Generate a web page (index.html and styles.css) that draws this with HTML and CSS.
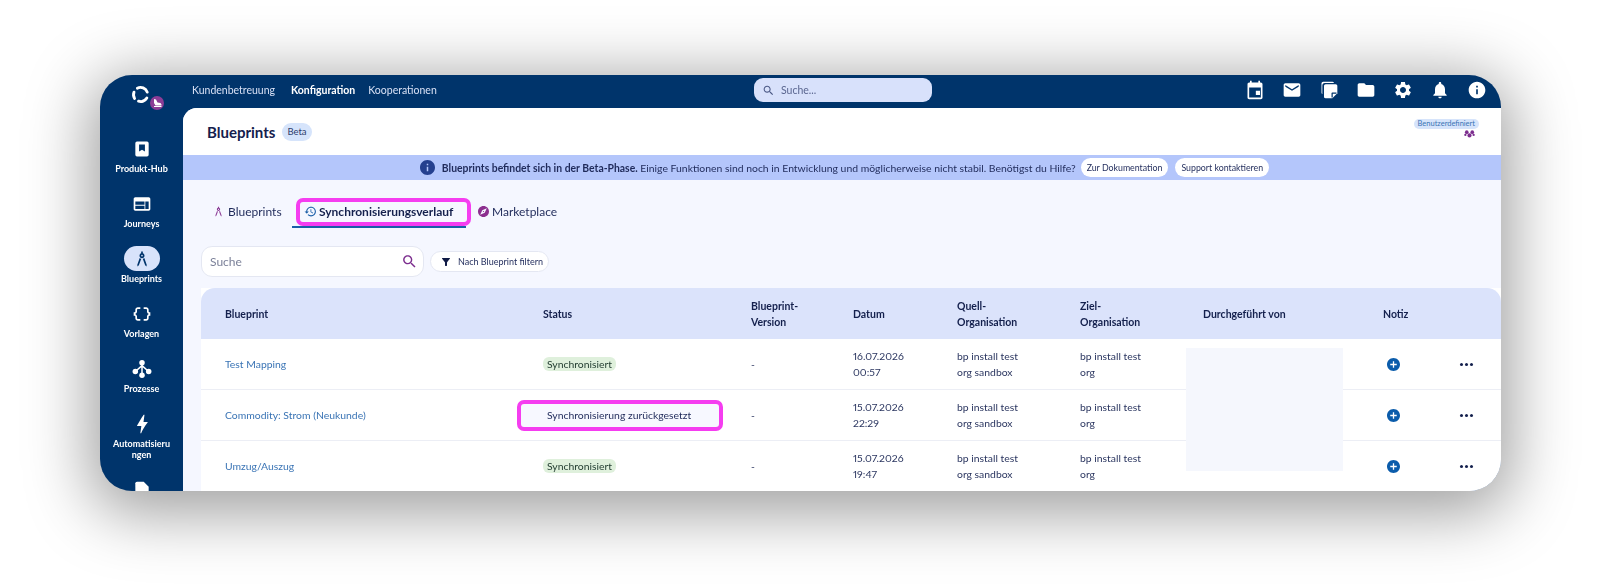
FILE: index.html
```html
<!DOCTYPE html>
<html lang="de">
<head>
  <meta charset="UTF-8">
  <title>Blueprints</title>
  <link rel="stylesheet" href="styles.css">
</head>
<body>
  <div class="window">
    <aside class="sidebar">
      <div class="logo">
        <svg class="logo-mark" viewBox="0 0 24 24" fill="none" stroke="#fff" stroke-width="3.600" stroke-linecap="round">
          <path d="M8 4A9 9 0 0 1 20.500 9"/>
          <path d="M20 16.500A9 9 0 0 1 9.500 20.500"/>
          <path d="M4.500 17A9 9 0 0 1 3.800 9"/>
        </svg>
        <span class="logo-badge">
          <svg viewBox="0 0 24 24" fill="#fff"><path d="M6 4l4 1 3 6 6 1 2 3v2H9L6 12zM6 18h15v2H6z"/></svg>
        </span>
      </div>
      <nav class="side-nav">
        <a class="side-item">
          <span class="side-icon"><svg viewBox="0 0 24 24"><path fill="#fff" d="M6 3h12a2 2 0 0 1 2 2v14a2 2 0 0 1-2 2H6a2 2 0 0 1-2-2V5a2 2 0 0 1 2-2zm2.500 3.500V15l3.500-2 3.500 2V6.500z"/></svg></span>
          <span class="side-label">Produkt-Hub</span>
        </a>
        <a class="side-item">
          <span class="side-icon"><svg viewBox="0 0 24 24"><path fill="#fff" d="M20 4H4c-1.100 0-1.990.9-1.990 2L2 18c0 1.100.9 2 2 2h16c1.100 0 2-.9 2-2V6c0-1.100-.9-2-2-2zm-5 14H4v-4h11v4zm0-5H4V9h11v4zm5 5h-4V9h4v9z"/></svg></span>
          <span class="side-label">Journeys</span>
        </a>
        <a class="side-item active">
          <span class="side-icon"><svg viewBox="0 0 24 24"><path fill="#00346b" d="M6.360 18.780L6.610 21l1.620-1.540 2.770-7.600c-.68-.17-1.280-.51-1.770-.98L6.360 18.780zM14.770 10.880c-.49.47-1.100.81-1.770.98l2.770 7.600L17.390 21l.26-2.220-2.880-7.900zM15 8c0-1.300-.84-2.400-2-2.820V3h-2v2.180C9.840 5.600 9 6.700 9 8c0 1.660 1.340 3 3 3s3-1.340 3-3zm-3 1c-.55 0-1-.45-1-1s.45-1 1-1 1 .45 1 1-.45 1-1 1z"/></svg></span>
          <span class="side-label">Blueprints</span>
        </a>
        <a class="side-item">
          <span class="side-icon"><svg viewBox="0 0 24 24"><path fill="#fff" d="M4 7v2c0 .55-.45 1-1 1H2v4h1c.55 0 1 .45 1 1v2c0 1.650 1.350 3 3 3h3v-2H7c-.55 0-1-.45-1-1v-2c0-1.300-.84-2.420-2-2.830v-.34C5.160 11.420 6 10.300 6 9V7c0-.55.45-1 1-1h3V4H7C5.350 4 4 5.350 4 7zM21 10c-.55 0-1-.45-1-1V7c0-1.650-1.350-3-3-3h-3v2h3c.55 0 1 .45 1 1v2c0 1.300.84 2.420 2 2.830v.34c-1.160.41-2 1.520-2 2.830v2c0 .55-.45 1-1 1h-3v2h3c1.650 0 3-1.350 3-3v-2c0-.55.45-1 1-1h1v-4h-1z"/></svg></span>
          <span class="side-label">Vorlagen</span>
        </a>
        <a class="side-item">
          <span class="side-icon"><svg viewBox="0 0 24 24"><g fill="#fff"><circle cx="12" cy="4.500" r="3.300"/><circle cx="4" cy="15" r="3.300"/><circle cx="20" cy="15" r="3.300"/><circle cx="12" cy="19.500" r="3.300"/></g><path fill="none" stroke="#fff" stroke-width="1.800" d="M12 6v12M12 8l-8 7M12 8l8 7"/></svg></span>
          <span class="side-label">Prozesse</span>
        </a>
        <a class="side-item">
          <span class="side-icon"><svg viewBox="0 0 24 24"><path fill="#fff" d="M11 23h-1l1.200-8.500H6.500c-.58 0-.57-.32-.38-.66C8 10.500 11 5.500 14 1h1l-1.200 8.500h4.700c.49 0 .56.33.47.51C15 15 12.500 19.500 11 23z"/></svg></span>
          <span class="side-label">Automatisierungen</span>
        </a>
        <a class="side-item">
          <span class="side-icon"><svg viewBox="0 0 24 24"><path fill="#fff" d="M6 2h8l6 6v12a2 2 0 0 1-2 2H6a2 2 0 0 1-2-2V4a2 2 0 0 1 2-2z"/></svg></span>
        </a>
      </nav>
    </aside>

    <div class="main">
      <header class="topbar">
        <nav class="top-nav">
          <a>Kundenbetreuung</a>
          <a class="current">Konfiguration</a>
          <a>Kooperationen</a>
        </nav>
        <div class="global-search">
          <svg viewBox="0 0 24 24"><path fill="#4c5a86" d="M15.500 14h-.79l-.28-.27C15.410 12.590 16 11.110 16 9.500 16 5.910 13.090 3 9.500 3S3 5.910 3 9.500 5.910 16 9.500 16c1.610 0 3.090-.59 4.230-1.570l.27.28v.79l5 4.990L20.490 19l-4.990-5zm-6 0C7.010 14 5 11.990 5 9.500S7.010 5 9.500 5 14 7.010 14 9.500 11.990 14 9.500 14z"/></svg>
          <span>Suche...</span>
        </div>
        <div class="top-icons">
          <svg viewBox="0 0 24 24"><path fill="#fff" d="M18 13h-5v5h5v-5zM16 1v2H8V1H6v2H5c-1.110 0-1.990.9-1.990 2L3 21c0 1.100.89 2 2 2h14c1.100 0 2-.9 2-2V5c0-1.100-.9-2-2-2h-1V1h-2zm3 20H5V9h14v12z"/></svg>
          <svg viewBox="0 0 24 24"><path fill="#fff" d="M20 4H4c-1.100 0-2 .9-2 2v12c0 1.100.9 2 2 2h16c1.100 0 2-.9 2-2V6c0-1.100-.9-2-2-2zm0 4l-8 5-8-5V6l8 5 8-5v2z"/></svg>
          <svg viewBox="0 0 24 24"><path fill="#fff" d="M5 2h11a2 2 0 0 1 2 1.500H7A3 3 0 0 0 4 6.500V17a2 2 0 0 1-1-1.700V4a2 2 0 0 1 2-2z"/><path fill="#fff" d="M8 5h12a2 2 0 0 1 2 2v9l-6 6H8a2 2 0 0 1-2-2V7a2 2 0 0 1 2-2z"/><path fill="#00346b" d="M15 21v-5a1 1 0 0 1 1-1h5v1.500h-4.500V21z"/></svg>
          <svg viewBox="0 0 24 24"><path fill="#fff" d="M10 4H4c-1.100 0-2 .9-2 2v12c0 1.100.9 2 2 2h16c1.100 0 2-.9 2-2V8c0-1.100-.9-2-2-2h-8l-2-2z"/></svg>
          <svg viewBox="0 0 24 24"><path fill="#fff" d="M19.140 12.940c.04-.3.06-.61.06-.94 0-.32-.02-.64-.07-.94l2.030-1.580c.18-.14.23-.41.12-.61l-1.920-3.320c-.12-.22-.37-.29-.59-.22l-2.390.96c-.5-.38-1.030-.7-1.620-.94l-.36-2.540c-.04-.24-.24-.41-.48-.41h-3.840c-.24 0-.43.17-.47.41l-.36 2.540c-.59.24-1.130.57-1.620.94l-2.390-.96c-.22-.08-.47 0-.59.22L2.740 8.870c-.12.21-.08.47.12.61l2.030 1.580c-.05.3-.09.63-.09.94s.02.64.07.94l-2.030 1.580c-.18.14-.23.41-.12.61l1.920 3.320c.12.22.37.29.59.22l2.390-.96c.5.38 1.030.7 1.620.94l.36 2.540c.05.24.24.41.48.41h3.840c.24 0 .44-.17.47-.41l.36-2.540c.59-.24 1.130-.56 1.620-.94l2.390.96c.22.08.47 0 .59-.22l1.920-3.320c.12-.22.07-.47-.12-.61l-2.010-1.580zM12 15.600c-1.980 0-3.600-1.620-3.600-3.600s1.620-3.600 3.600-3.600 3.600 1.620 3.600 3.600-1.620 3.600-3.600 3.600z"/></svg>
          <svg viewBox="0 0 24 24"><path fill="#fff" d="M12 22c1.100 0 2-.9 2-2h-4c0 1.100.89 2 2 2zm6-6v-5c0-3.070-1.640-5.640-4.500-6.320V4c0-.83-.67-1.500-1.500-1.500s-1.500.67-1.500 1.500v.68C7.630 5.360 6 7.920 6 11v5l-2 2v1h16v-1l-2-2z"/></svg>
          <svg viewBox="0 0 24 24"><path fill="#fff" d="M12 2C6.480 2 2 6.480 2 12s4.480 10 10 10 10-4.480 10-10S17.520 2 12 2zm1 15h-2v-6h2v6zm0-8h-2V7h2v2z"/></svg>
        </div>
      </header>

      <div class="content">
        <div class="title-bar">
          <h1>Blueprints</h1>
          <span class="beta">Beta</span>
          <div class="org-type">
            <span class="org-chip">Benutzerdefiniert</span>
            <svg viewBox="0 0 24 16"><g fill="#7c2d8e"><circle cx="6" cy="4" r="4"/><circle cx="18" cy="4" r="4"/><circle cx="12" cy="11" r="4.500"/><circle cx="3" cy="10" r="2.500"/><circle cx="21" cy="10" r="2.500"/></g></svg>
          </div>
        </div>

        <div class="banner">
          <svg class="banner-icon" viewBox="2 2 20 20"><path fill="#25408f" d="M12 2C6.480 2 2 6.480 2 12s4.480 10 10 10 10-4.480 10-10S17.520 2 12 2zm1 15h-2v-6h2v6zm0-8h-2V7h2v2z"/></svg>
          <p><b>Blueprints befindet sich in der Beta-Phase.</b> Einige Funktionen sind noch in Entwicklung und möglicherweise nicht stabil. Benötigst du Hilfe?</p>
          <button>Zur Dokumentation</button>
          <button>Support kontaktieren</button>
        </div>

        <div class="tabs">
          <a class="tab tab-first">
            <svg viewBox="0 0 24 24"><path fill="#8c3d96" d="M6.360 18.780L6.610 21l1.620-1.540 2.770-7.600c-.68-.17-1.280-.51-1.770-.98L6.360 18.780zM14.770 10.880c-.49.47-1.100.81-1.770.98l2.770 7.600L17.390 21l.26-2.220-2.880-7.900zM15 8c0-1.300-.84-2.400-2-2.820V3h-2v2.180C9.840 5.600 9 6.700 9 8c0 1.660 1.340 3 3 3s3-1.340 3-3zm-3 1c-.55 0-1-.45-1-1s.45-1 1-1 1 .45 1 1-.45 1-1 1z"/></svg>
            Blueprints
          </a>
          <a class="tab tab-active">
            <svg viewBox="0 0 24 24"><path fill="#1a5ea8" d="M13 3c-4.970 0-9 4.030-9 9H1l3.890 3.890.07.14L9 12H6c0-3.870 3.130-7 7-7s7 3.130 7 7-3.130 7-7 7c-1.930 0-3.680-.79-4.940-2.060l-1.420 1.420C8.270 19.990 10.510 21 13 21c4.970 0 9-4.030 9-9s-4.030-9-9-9zm-1 5v5l4.280 2.540.72-1.210-3.500-2.080V8H12z"/></svg>
            Synchronisierungsverlauf
            <span class="tab-mark"></span>
          </a>
          <a class="tab tab-last">
            <svg viewBox="2 2 20 20"><path fill="#8c2f8f" d="M12 10.900c-.61 0-1.100.49-1.100 1.100s.49 1.100 1.100 1.100c.61 0 1.100-.49 1.100-1.100s-.49-1.100-1.100-1.100zM12 2C6.480 2 2 6.480 2 12s4.480 10 10 10 10-4.480 10-10S17.520 2 12 2zm2.190 12.190L6 18l3.810-8.190L18 6l-3.810 8.190z"/></svg>
            Marketplace
          </a>
        </div>

        <div class="filters">
          <div class="search-box">
            <span>Suche</span>
            <svg viewBox="0 0 24 24"><path fill="#7c2d8e" d="M15.500 14h-.79l-.28-.27C15.410 12.590 16 11.110 16 9.500 16 5.910 13.090 3 9.500 3S3 5.910 3 9.500 5.910 16 9.500 16c1.610 0 3.090-.59 4.230-1.570l.27.28v.79l5 4.990L20.490 19l-4.990-5zm-6 0C7.010 14 5 11.990 5 9.500S7.010 5 9.500 5 14 7.010 14 9.500 11.990 14 9.500 14z"/></svg>
          </div>
          <button class="filter-btn">
            <svg viewBox="0 0 24 24"><path fill="#0f1a45" d="M4.250 5.610C6.270 8.200 10 13 10 13v6c0 .55.45 1 1 1h2c.55 0 1-.45 1-1v-6s3.720-4.800 5.740-7.390c.51-.66.04-1.610-.79-1.610H5.040c-.83 0-1.300.95-.79 1.610z"/></svg>
            Nach Blueprint filtern
          </button>
        </div>

        <div class="table-wrap">
          <table class="history">
            <colgroup>
              <col class="c-name"><col class="c-status"><col class="c-version"><col class="c-date"><col class="c-org"><col class="c-org"><col class="c-user"><col class="c-note"><col>
            </colgroup>
            <thead>
              <tr>
                <th>Blueprint</th>
                <th>Status</th>
                <th>Blueprint-<br>Version</th>
                <th>Datum</th>
                <th>Quell-<br>Organisation</th>
                <th>Ziel-<br>Organisation</th>
                <th>Durchgeführt von</th>
                <th>Notiz</th>
                <th></th>
              </tr>
            </thead>
            <tbody>
              <tr>
                <td><a class="link">Test Mapping</a></td>
                <td><span class="chip">Synchronisiert</span></td>
                <td>-</td>
                <td>16.07.2026<br>00:57</td>
                <td>bp install test<br>org sandbox</td>
                <td>bp install test<br>org</td>
                <td></td>
                <td><svg class="add" viewBox="2 2 20 20"><path fill="#0b5cab" d="M12 2C6.480 2 2 6.480 2 12s4.480 10 10 10 10-4.480 10-10S17.520 2 12 2zm5 11h-4v4h-2v-4H7v-2h4V7h2v4h4v2z"/></svg></td>
                <td><span class="dots"><i></i><i></i><i></i></span></td>
              </tr>
              <tr>
                <td><a class="link">Commodity: Strom (Neukunde)</a></td>
                <td><span class="status-marked">Synchronisierung zurückgesetzt</span></td>
                <td>-</td>
                <td>15.07.2026<br>22:29</td>
                <td>bp install test<br>org sandbox</td>
                <td>bp install test<br>org</td>
                <td></td>
                <td><svg class="add" viewBox="2 2 20 20"><path fill="#0b5cab" d="M12 2C6.480 2 2 6.480 2 12s4.480 10 10 10 10-4.480 10-10S17.520 2 12 2zm5 11h-4v4h-2v-4H7v-2h4V7h2v4h4v2z"/></svg></td>
                <td><span class="dots"><i></i><i></i><i></i></span></td>
              </tr>
              <tr>
                <td><a class="link">Umzug/Auszug</a></td>
                <td><span class="chip">Synchronisiert</span></td>
                <td>-</td>
                <td>15.07.2026<br>19:47</td>
                <td>bp install test<br>org sandbox</td>
                <td>bp install test<br>org</td>
                <td></td>
                <td><svg class="add" viewBox="2 2 20 20"><path fill="#0b5cab" d="M12 2C6.480 2 2 6.480 2 12s4.480 10 10 10 10-4.480 10-10S17.520 2 12 2zm5 11h-4v4h-2v-4H7v-2h4V7h2v4h4v2z"/></svg></td>
                <td><span class="dots"><i></i><i></i><i></i></span></td>
              </tr>
            </tbody>
          </table>
          <div class="redacted"></div>
        </div>
      </div>
    </div>
  </div>
</body>
</html>
```

FILE: styles.css
```css
html, body {
  margin: 0;
  height: 586px;
  overflow: hidden;
  background: #fff;
}
body {
  padding: 75px 0 0 100px;
  box-sizing: border-box;
  font-family: Lato, "Open Sans", sans-serif;
  color: #17224d;
}
svg {
  display: block;
}
.window {
  display: flex;
  width: 1401px;
  height: 416px;
  background: #00346b;
  border-radius: 32px;
  overflow: hidden;
  box-shadow: 0 12px 64px 10px rgba(0, 0, 0, 0.38);
  filter: blur(0.3px);
}

/* sidebar */
.sidebar {
  width: 83px;
  flex: none;
  color: #fff;
}
.logo {
  position: relative;
  height: 61px;
}
.logo-mark {
  position: absolute;
  left: 31px;
  top: 10px;
  width: 19px;
  height: 19px;
}
.logo-badge {
  position: absolute;
  left: 50px;
  top: 21px;
  width: 14px;
  height: 14px;
  padding: 1px;
  box-sizing: border-box;
  border-radius: 50%;
  background: #8c3d96;
}
.side-nav {
  display: flex;
  flex-direction: column;
}
.side-item {
  padding-bottom: 17px;
  display: flex;
  flex-direction: column;
  align-items: center;
  text-align: center;
}
.side-icon {
  width: 36px;
  height: 25px;
  border-radius: 13px;
  display: flex;
  align-items: center;
  justify-content: center;
}
.side-icon svg {
  width: 20px;
  height: 20px;
}
.side-item.active .side-icon {
  background: #d8e3fb;
}
.side-label {
  margin-top: 2px;
  width: 60px;
  font-size: 9px;
  line-height: 11px;
  font-weight: 700;
  word-break: break-all;
}

/* top bar */
.main {
  flex: 1;
  min-width: 0;
  display: flex;
  flex-direction: column;
}
.topbar {
  height: 33px;
  flex: none;
  box-sizing: border-box;
  padding-bottom: 3px;
  display: flex;
  align-items: center;
}
.top-nav {
  width: 571px;
  box-sizing: border-box;
  display: flex;
  gap: 13px;
  padding-left: 9px;
  font-size: 10.500px;
  color: #d7e0f5;
}
.top-nav .current {
  color: #fff;
  font-weight: 700;
  margin-left: 3px;
}
.global-search {
  width: 178px;
  height: 24px;
  box-sizing: border-box;
  padding-left: 8px;
  display: flex;
  align-items: center;
  gap: 6px;
  background: #d8e1fb;
  border-radius: 9px;
  font-size: 10.500px;
  color: #5a6690;
}
.global-search svg {
  width: 13px;
  height: 13px;
}
.top-icons {
  margin-left: auto;
  display: flex;
  gap: 17px;
  padding-right: 14px;
}
.top-icons svg {
  width: 20px;
  height: 20px;
}

/* content */
.content {
  flex: 1;
  min-height: 0;
  background: #f5f7ff;
  border-top-left-radius: 14px;
  overflow: hidden;
}
.title-bar {
  height: 47px;
  box-sizing: border-box;
  background: #fff;
  display: flex;
  align-items: center;
  padding: 0 22px 0 24px;
}
.title-bar h1 {
  margin: 0;
  font-size: 15px;
  font-weight: 700;
  color: #14204d;
}
.beta {
  margin-left: 7px;
  height: 18px;
  line-height: 18px;
  padding: 0 5px;
  border-radius: 9px;
  background: #d6e4fb;
  font-size: 9.500px;
  color: #2e3c6b;
}
.org-type {
  margin-left: auto;
  align-self: flex-start;
  padding-top: 11px;
  display: flex;
  flex-direction: column;
  align-items: flex-end;
}
.org-chip {
  height: 10px;
  line-height: 10px;
  padding: 0 4px;
  border-radius: 5px;
  background: #d6e4fb;
  color: #3a74b5;
  font-size: 7.500px;
}
.org-type svg {
  width: 11px;
  height: 8px;
  margin: 1px 4px 0 0;
}
.banner {
  height: 25px;
  padding-left: 5px;
  background: #b4c6fb;
  display: flex;
  align-items: center;
  justify-content: center;
  gap: 7px;
  font-size: 10.400px;
  color: #1f2a5a;
}
.banner p {
  margin: 0 -2px 0 0;
}
.banner-icon {
  width: 15px;
  height: 15px;
}
.banner button {
  height: 19px;
  padding: 0 6px;
  border: 0;
  border-radius: 10px;
  background: #fff;
  font: 8.800px Lato, "Open Sans", sans-serif;
  color: #1f2a5a;
}

/* tabs */
.tabs {
  display: flex;
  align-items: flex-end;
  height: 48px;
  font-size: 12px;
  color: #1f2a5a;
}
.tab {
  display: flex;
  align-items: center;
  height: 30px;
  padding-bottom: 1px;
  box-sizing: border-box;
  border-bottom: 2px solid transparent;
}
.tab svg {
  width: 13px;
  height: 13px;
  margin-right: 3px;
}
.tab-first {
  margin-left: 29px;
  width: 80px;
}
.tab-active {
  position: relative;
  width: 174px;
  padding-left: 12px;
  font-weight: 700;
  color: #14204d;
  border-bottom-color: #1a5ea8;
}
.tab-active svg {
  margin-right: 2px;
}
.tab-mark {
  position: absolute;
  left: 4px;
  right: -5px;
  top: 0;
  height: 28px;
  box-sizing: border-box;
  border: 4px solid #f53df0;
  border-radius: 7px;
}
.tab-last {
  margin-left: 12px;
}
.tab-last svg {
  width: 11px;
  height: 11px;
  margin-right: 3px;
}
.filters {
  display: flex;
  align-items: center;
  gap: 6px;
  margin: 18px 0 11px 18px;
}
.search-box {
  width: 223px;
  height: 31px;
  box-sizing: border-box;
  padding: 0 5px 1px 8px;
  display: flex;
  align-items: center;
  justify-content: space-between;
  background: #fff;
  border: 1px solid #e4e7f2;
  border-radius: 11px;
  font-size: 12px;
  color: #7b8199;
}
.search-box svg {
  width: 17px;
  height: 17px;
}
.filter-btn {
  height: 21px;
  width: 119px;
  padding: 0 0 0 9px;
  display: flex;
  align-items: center;
  gap: 6px;
  white-space: nowrap;
  background: #fff;
  border: 1px solid #e4e7f2;
  border-radius: 11px;
  font: 9px Lato, "Open Sans", sans-serif;
  color: #1f2a5a;
}
.filter-btn svg {
  width: 12px;
  height: 12px;
}

/* table */
.table-wrap {
  position: relative;
  margin-left: 18px;
}
.history {
  width: 1300px;
  table-layout: fixed;
  border-collapse: separate;
  border-spacing: 0;
  background: #fff;
  font-size: 10.400px;
  font-variant-numeric: proportional-nums;
  color: #2b3660;
}
.c-name { width: 342px; }
.c-status { width: 208px; }
.c-version { width: 102px; }
.c-date { width: 104px; }
.c-org { width: 123px; }
.c-user { width: 180px; }
.c-note { width: 74px; }
.history th {
  height: 51px;
  padding: 0;
  text-align: left;
  background: #dbe3fb;
  font-size: 10.500px;
  line-height: 16px;
  font-weight: 700;
  color: #14204d;
}
.history th:first-child {
  border-top-left-radius: 14px;
}
.history th:last-child {
  border-top-right-radius: 14px;
}
.history th:first-child, .history td:first-child {
  padding-left: 24px;
}
.history td {
  height: 50px;
  padding: 0;
  line-height: 16.500px;
  border-bottom: 1px solid #eceef5;
}
.link {
  color: #3a74b5;
}
.chip {
  display: inline-block;
  height: 14px;
  line-height: 14px;
  padding: 0 4px;
  border-radius: 6px;
  background: #dff0dc;
  color: #1f3a2e;
}
.status-marked {
  display: block;
  box-sizing: border-box;
  width: 206px;
  height: 31px;
  line-height: 23px;
  margin-left: -26px;
  padding-left: 26px;
  border: 4px solid #f53df0;
  border-radius: 7px;
  background: #f7f8ff;
  color: #1f2a5a;
}
.add {
  width: 13px;
  height: 13px;
  margin-left: 4px;
}
.dots {
  display: flex;
  gap: 2px;
  padding-left: 3px;
}
.dots i {
  width: 3px;
  height: 3px;
  border-radius: 50%;
  background: #14204d;
}
.redacted {
  position: absolute;
  left: 985px;
  top: 60px;
  width: 157px;
  height: 123px;
  background: #f5f7fd;
}
```
